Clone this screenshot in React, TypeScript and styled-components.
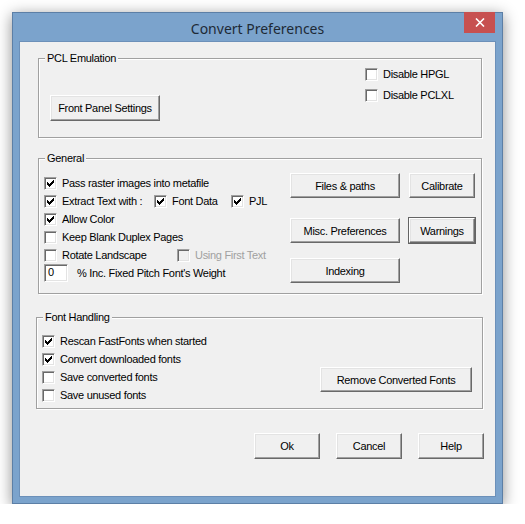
import React from "react";
import styled, { createGlobalStyle } from "styled-components";

const GlobalStyle = createGlobalStyle`
  html, body {
    margin: 0;
    padding: 0;
    background: #ffffff;
  }
  body {
    font-family: "Liberation Sans", Arial, sans-serif;
    font-size: 11px;
    letter-spacing: -0.3px;
    color: #000;
  }
`;

const Page = styled.div`
  padding: 12px 0 0 12px;
`;

const Window = styled.div`
  box-sizing: border-box;
  width: 491px;
  height: 492px;
  padding: 0 7px 7px 7px;
  background: #7ba3cc;
  border: 1px solid #5c7fa6;
  box-shadow: 0 3px 14px rgba(0, 0, 0, 0.45);
  display: flex;
  flex-direction: column;
`;

const TitleBar = styled.div`
  height: 29px;
  display: grid;
  grid-template-columns: 1fr auto 1fr;
  align-items: center;
`;

const Title = styled.div`
  grid-column: 2;
  font-family: "Noto Sans", "Open Sans", sans-serif;
  font-size: 14px;
  letter-spacing: 0;
  color: #1e2a36;
  padding-top: 1px;
`;

const CloseButton = styled.div`
  grid-column: 3;
  justify-self: end;
  align-self: start;
  margin-top: -1px;
  width: 31px;
  height: 21px;
  background: #c75050;
  display: flex;
  align-items: center;
  justify-content: center;
`;

const Client = styled.div`
  flex: 1;
  background: #f0f0f0;
  box-shadow: 0 0 0 1px #6c90b9;
  padding-top: 16px;
  display: flex;
  flex-direction: column;
`;

const Group = styled.div<{ $left: number; $right: number; $height: number; $top?: number }>`
  position: relative;
  box-sizing: border-box;
  margin: ${(p) => p.$top ?? 0}px ${(p) => p.$right}px 0 ${(p) => p.$left}px;
  height: ${(p) => p.$height}px;
  border: 1px solid #a0a0a0;
  box-shadow: inset 1px 1px #ffffff, 1px 1px #ffffff;
  display: flex;
`;

const Legend = styled.span`
  position: absolute;
  top: -7px;
  left: 6px;
  padding: 0 2px 0 2px;
  line-height: 13px;
  background: #f0f0f0;
`;

const Button = styled.div<{ $w: number; $h?: number; $default?: boolean }>`
  box-sizing: border-box;
  width: ${(p) => p.$w}px;
  height: ${(p) => p.$h ?? 25}px;
  display: flex;
  align-items: center;
  justify-content: center;
  background: #f0f0f0;
  border-style: solid;
  border-width: 1px;
  border-color: #ffffff #696969 #696969 #ffffff;
  box-shadow: inset -1px -1px #a0a0a0, inset 1px 1px #e3e3e3;
  ${(p) =>
    p.$default &&
    `
    outline: 1px solid #646464;
    outline-offset: 0;
  `}
  white-space: nowrap;
`;

const Box = styled.span<{ $disabled?: boolean }>`
  box-sizing: border-box;
  flex: none;
  width: 13px;
  height: 13px;
  border-style: solid;
  border-width: 1px;
  border-color: #a0a0a0 #ffffff #ffffff #a0a0a0;
  box-shadow: inset 1px 1px #696969, inset -1px -1px #e3e3e3;
  background: ${(p) => (p.$disabled ? "#f0f0f0" : "#ffffff")};
  display: flex;
  align-items: center;
  justify-content: center;
`;

const CheckRow = styled.div<{ $w?: number }>`
  display: flex;
  align-items: center;
  height: 18px;
  gap: 5px;
  ${(p) => (p.$w ? `width: ${p.$w}px; flex: none;` : "")}
  white-space: nowrap;
`;

const Label = styled.span<{ $disabled?: boolean }>`
  color: ${(p) => (p.$disabled ? "#a0a0a0" : "#000")};
  line-height: 13px;
`;

const Line = styled.div`
  display: flex;
  align-items: center;
`;

const Column = styled.div<{ $w?: number; $top: number; $left: number; $gap?: number }>`
  box-sizing: border-box;
  display: flex;
  flex-direction: column;
  gap: ${(p) => p.$gap ?? 0}px;
  padding: ${(p) => p.$top}px 0 0 ${(p) => p.$left}px;
  ${(p) => (p.$w ? `width: ${p.$w}px; flex: none;` : "")}
`;

const ButtonRow = styled.div<{ $top: number }>`
  display: flex;
  gap: 9px;
  margin-top: ${(p) => p.$top}px;
`;

const EditRow = styled.div`
  display: flex;
  align-items: center;
  gap: 9px;
`;

const Edit = styled.div`
  box-sizing: border-box;
  width: 24px;
  height: 18px;
  background: #ffffff;
  border-style: solid;
  border-width: 1px;
  border-color: #a0a0a0 #ffffff #ffffff #a0a0a0;
  box-shadow: inset 1px 1px #696969, inset -1px -1px #e3e3e3;
  padding: 1px 0 0 3px;
  line-height: 13px;
`;

const Footer = styled.div`
  display: flex;
  justify-content: flex-end;
  gap: 16px;
  margin-top: 24px;
  padding-right: 11px;
`;

const Mark = () => (
  <svg width="7" height="7" viewBox="0 0 7 7" shapeRendering="crispEdges">
    {[
      [0, 2],
      [1, 3],
      [2, 4],
      [3, 3],
      [4, 2],
      [5, 1],
      [6, 0],
    ].map(([x, y]) => (
      <rect key={x} x={x} y={y} width="1" height="3" fill="#000" />
    ))}
  </svg>
);

function Check({
  label,
  checked,
  disabled,
  w,
}: {
  label: string;
  checked?: boolean;
  disabled?: boolean;
  w?: number;
}) {
  return (
    <CheckRow $w={w}>
      <Box $disabled={disabled}>{checked && <Mark />}</Box>
      <Label $disabled={disabled}>{label}</Label>
    </CheckRow>
  );
}

export default function App() {
  return (
    <Page>
      <GlobalStyle />
      <Window>
        <TitleBar>
          <Title>Convert Preferences</Title>
          <CloseButton>
            <svg width="10" height="9" viewBox="0 0 10 9">
              <path d="M1 0.5 L9 8.5 M9 0.5 L1 8.5" stroke="#fff" strokeWidth="1.6" />
            </svg>
          </CloseButton>
        </TitleBar>
        <Client>
          <Group $left={18} $right={13} $height={80}>
            <Legend>PCL Emulation</Legend>
            <Column $w={326} $top={36} $left={11}>
              <Button $w={110} $h={26}>
                Front Panel Settings
              </Button>
            </Column>
            <Column $top={6} $left={0} $gap={3}>
              <Check label="Disable HPGL" />
              <Check label="Disable PCLXL" />
            </Column>
          </Group>

          <Group $left={18} $right={13} $height={136} $top={20}>
            <Legend>General</Legend>
            <Column $w={251} $top={15} $left={5}>
              <Check label="Pass raster images into metafile" checked />
              <Line>
                <Check label="Extract Text with :" checked w={110} />
                <Check label="Font Data" checked w={77} />
                <Check label="PJL" checked />
              </Line>
              <Check label="Allow Color" checked />
              <Check label="Keep Blank Duplex Pages" />
              <Line>
                <Check label="Rotate Landscape" w={133} />
                <Check label="Using First Text" disabled />
              </Line>
              <EditRow>
                <Edit>0</Edit>
                <span>% Inc. Fixed Pitch Font's Weight</span>
              </EditRow>
            </Column>
            <Column $top={0} $left={0}>
              <ButtonRow $top={14}>
                <Button $w={110}>Files &amp; paths</Button>
                <Button $w={66}>Calibrate</Button>
              </ButtonRow>
              <ButtonRow $top={20}>
                <Button $w={110}>Misc. Preferences</Button>
                <Button $w={66} $default>
                  Warnings
                </Button>
              </ButtonRow>
              <ButtonRow $top={15}>
                <Button $w={110}>Indexing</Button>
              </ButtonRow>
            </Column>
          </Group>

          <Group $left={16} $right={12} $height={92} $top={23}>
            <Legend>Font Handling</Legend>
            <Column $w={283} $top={14} $left={5}>
              <Check label="Rescan FastFonts when started" checked />
              <Check label="Convert downloaded fonts" checked />
              <Check label="Save converted fonts" />
              <Check label="Save unused fonts" />
            </Column>
            <Column $top={49} $left={0}>
              <Button $w={152}>Remove Converted Fonts</Button>
            </Column>
          </Group>

          <Footer>
            <Button $w={66} $h={26}>
              Ok
            </Button>
            <Button $w={66} $h={26}>
              Cancel
            </Button>
            <Button $w={66} $h={26}>
              Help
            </Button>
          </Footer>
        </Client>
      </Window>
    </Page>
  );
}
